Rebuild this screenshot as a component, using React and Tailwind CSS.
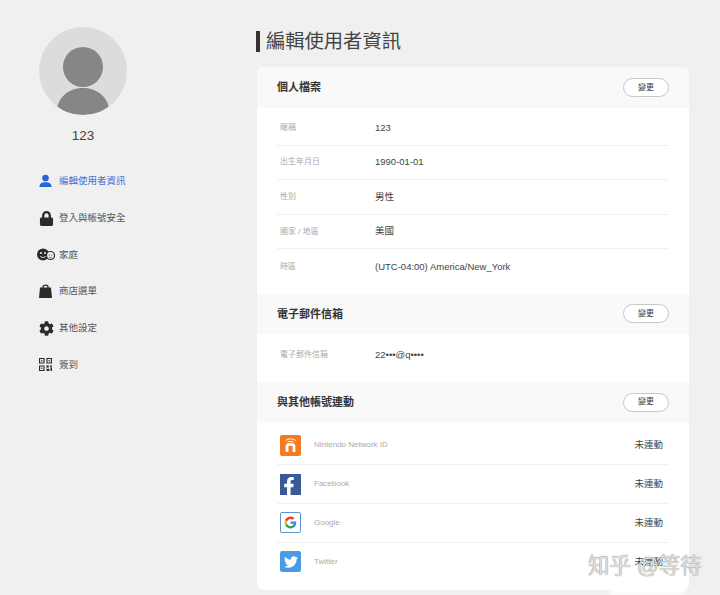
import React from 'react';
import { FaFacebookF, FaTwitter, FaLock, FaCog } from 'react-icons/fa';

const UserIcon = ({ className }) => (
  <svg viewBox="0 0 14 14" className={className} fill="currentColor">
    <circle cx="7" cy="3.8" r="3.6" />
    <path d="M0.5 13.5 C0.5 9.8 3 8.4 7 8.4 C11 8.4 13.5 9.8 13.5 13.5 Z" />
  </svg>
);

const FamilyIcon = ({ className }) => (
  <svg viewBox="0 0 18 13" className={className}>
    <circle cx="6" cy="6.5" r="6" fill="#2b2b2b" />
    <circle cx="4" cy="5" r="1" fill="#f0f0f0" />
    <circle cx="8" cy="5" r="1" fill="#f0f0f0" />
    <path d="M3.2 8 C4.5 10 7.5 10 8.8 8" stroke="#f0f0f0" strokeWidth="1" fill="none" />
    <circle cx="13.5" cy="7.5" r="4" fill="#f0f0f0" stroke="#2b2b2b" strokeWidth="1.2" />
    <circle cx="12.2" cy="7" r="0.6" fill="#2b2b2b" />
    <circle cx="14.8" cy="7" r="0.6" fill="#2b2b2b" />
    <path d="M12 9 C13 9.8 14 9.8 15 9" stroke="#2b2b2b" strokeWidth="0.7" fill="none" />
  </svg>
);

const BagIcon = ({ className }) => (
  <svg viewBox="0 0 13 14" className={className}>
    <path d="M4 4 V2.8 C4 0.6 9 0.6 9 2.8 V4" fill="none" stroke="#2b2b2b" strokeWidth="1.3" />
    <path d="M1 3.5 H12 L13 14 H0 Z" fill="#2b2b2b" />
  </svg>
);

const QrIcon = ({ className }) => (
  <svg viewBox="0 0 14 14" className={className} fill="#2b2b2b">
    <path fillRule="evenodd" d="M0 0h6v6H0z M1.2 1.2v3.6h3.6V1.2z" />
    <rect x="2.3" y="2.3" width="1.4" height="1.4" />
    <path fillRule="evenodd" d="M8 0h6v6H8z M9.2 1.2v3.6h3.6V1.2z" />
    <rect x="10.3" y="2.3" width="1.4" height="1.4" />
    <path fillRule="evenodd" d="M0 8h6v6H0z M1.2 9.2v3.6h3.6V9.2z" />
    <rect x="2.3" y="10.3" width="1.4" height="1.4" />
    <rect x="8" y="8" width="2.4" height="2.4" />
    <rect x="11.6" y="8" width="2.4" height="1.4" />
    <rect x="12.4" y="10" width="1.6" height="4" />
    <rect x="8" y="11.6" width="3.2" height="2.4" />
  </svg>
);

const NintendoLogo = () => (
  <div className="w-[21px] h-[21px] rounded-[2px] bg-[#f47a25] flex items-center justify-center">
    <svg viewBox="0 0 21 21" className="w-[21px] h-[21px]" fill="none" stroke="#fff">
      <path d="M5.5 5.5 C8 3.4 13 3.4 15.5 5.5" strokeWidth="1" />
      <path d="M7.5 7.2 C9 6.2 12 6.2 13.5 7.2" strokeWidth="1" />
      <path d="M7 17 V11 C7 8.8 14 8.8 14 11 V17" strokeWidth="2.8" />
    </svg>
  </div>
);

const GoogleLogo = () => (
  <div className="w-[21px] h-[21px] rounded-[2px] bg-white border border-[#5b93d3] flex items-center justify-center">
    <svg viewBox="0 0 24 24" className="w-[13px] h-[13px]">
      <path fill="#4285F4" d="M22.6 12.3c0-.8-.1-1.6-.2-2.3H12v4.3h5.900c-.3 1.400-1 2.500-2.200 3.300v2.800h3.600c2.100-1.900 3.300-4.800 3.300-8.100z" />
      <path fill="#34A853" d="M12 23c3 0 5.500-1 7.300-2.700l-3.600-2.800c-1 .7-2.200 1.100-3.700 1.100-2.900 0-5.300-1.900-6.200-4.500H2.100v2.900C3.900 20.500 7.700 23 12 23z" />
      <path fill="#FBBC05" d="M5.800 14.100c-.2-.7-.4-1.400-.4-2.100s.1-1.400.4-2.100V7H2.100C1.400 8.500 1 10.200 1 12s.4 3.500 1.100 5l3.700-2.900z" />
      <path fill="#EA4335" d="M12 5.400c1.600 0 3.100.6 4.200 1.600l3.200-3.200C17.500 2 15 1 12 1 7.700 1 3.900 3.500 2.100 7l3.700 2.900C6.700 7.300 9.100 5.400 12 5.400z" />
    </svg>
  </div>
);

const menu = [
  { label: '編輯使用者資訊', icon: <UserIcon className="w-[13px] h-[14px]" />, active: true },
  { label: '登入與帳號安全', icon: <FaLock className="text-[15px] text-[#2b2b2b]" /> },
  { label: '家庭', icon: <FamilyIcon className="w-[18px] h-[13px] shrink-0 -ml-[2px]" /> },
  { label: '商店選單', icon: <BagIcon className="w-[13px] h-[14px]" /> },
  { label: '其他設定', icon: <FaCog className="text-[15px] text-[#2b2b2b]" /> },
  { label: '簽到', icon: <QrIcon className="w-[13px] h-[13px]" /> },
];

const profile = [
  ['暱稱', '123'],
  ['出生年月日', '1990-01-01'],
  ['性別', '男性'],
  ['國家 / 地區', '美國'],
  ['時區', '(UTC-04:00) America/New_York'],
];

const linked = [
  { name: 'Nintendo Network ID', logo: <NintendoLogo /> },
  { name: 'Facebook', logo: <div className="w-[21px] h-[21px] bg-[#3b5998] flex items-end justify-end pr-[3px] text-white"><FaFacebookF className="text-[18px]" /></div> },
  { name: 'Google', logo: <GoogleLogo /> },
  { name: 'Twitter', logo: <div className="w-[21px] h-[21px] rounded-[2px] bg-[#4a9be5] flex items-center justify-center text-white"><FaTwitter className="text-[14px]" /></div> },
];

const SectionHeader = ({ title, className }) => (
  <div className={`flex items-center justify-between bg-[#f9f9f9] px-5 ${className}`}>
    <h2 className="text-[11px] font-bold text-[#333]">{title}</h2>
    <button className="w-[46px] h-[19px] rounded-full border border-[#c8c8c8] bg-white text-[8px] text-[#333] flex items-center justify-center">變更</button>
  </div>
);

const InfoRow = ({ label, value, last }) => (
  <div className={`flex items-center h-[34.6px] mx-5 ${last ? '' : 'border-b border-[#f0f0f0]'}`}>
    <span className="w-[98px] pl-[3px] text-[8px] text-[#aaa]">{label}</span>
    <span className="text-[9.5px] text-[#444]">{value}</span>
  </div>
);

export default function App() {
  return (
    <div className="relative h-[595px] w-[720px] overflow-hidden bg-[#f0f0f0] flex font-['Liberation_Sans','Noto_Sans_CJK_TC',sans-serif]">
      <aside className="w-[257px] shrink-0 pt-[27px] pl-[39px]">
        <div className="w-[88px] flex flex-col items-center">
          <div className="w-[88px] h-[88px] rounded-full bg-[#dcdcdc] overflow-hidden">
            <svg viewBox="0 0 88 88" className="w-full h-full" fill="#868686">
              <circle cx="44" cy="40" r="20" />
              <path d="M18 82 C20 68 32 61 44 61 C56 61 68 68 70 82 C62 86 52 88 44 88 C36 88 26 86 18 82 Z" />
            </svg>
          </div>
          <p className="mt-[13px] text-[13.5px] leading-4 text-[#444]">123</p>
        </div>
        <nav className="mt-[19px] flex flex-col">
          {menu.map((item) => (
            <div key={item.label} className="flex items-center h-[36.7px]">
              <span className={`w-[20px] shrink-0 flex justify-start ${item.active ? 'text-[#2a62d8]' : ''}`}>{item.icon}</span>
              <span className={`text-[9.5px] ${item.active ? 'text-[#4a6fd0]' : 'text-[#555]'}`}>{item.label}</span>
            </div>
          ))}
        </nav>
      </aside>

      <main className="flex-1 pt-[31px]">
        <h1 className="h-[21px] pt-[2px] flex items-center border-l-[4px] border-[#333] pl-[6px] -ml-[1px] text-[19.3px] text-[#444]">編輯使用者資訊</h1>
        <section className="mt-[15px] w-[432px] h-[523px] bg-white rounded-[6px] overflow-hidden">
          <SectionHeader title="個人檔案" className="h-[41px] rounded-t-[6px]" />
          <div className="pt-[3px] pb-[10px]">
            {profile.map(([label, value], i) => (
              <InfoRow key={label} label={label} value={value} last={i === profile.length - 1} />
            ))}
          </div>
          <SectionHeader title="電子郵件信箱" className="h-[40px]" />
          <div className="pt-[4px] pb-[9px]">
            <InfoRow label="電子郵件信箱" value="22•••@q••••" last />
          </div>
          <SectionHeader title="與其他帳號連動" className="h-[41px]" />
          <div className="pt-[4px]">
            {linked.map((item, i) => (
              <div key={item.name} className={`flex items-center h-[38.7px] mx-5 ${i === linked.length - 1 ? '' : 'border-b border-[#f0f0f0]'}`}>
                <span className="w-[37px] pl-[3px]">{item.logo}</span>
                <span className="flex-1 text-[8px] text-[#aaa]">{item.name}</span>
                <span className="pr-[6px] text-[9.5px] text-[#444]">未連動</span>
              </div>
            ))}
          </div>
        </section>
      </main>

      <div className="absolute left-[610px] top-[587px] w-[75px] h-[8px] bg-white blur-[2px]" />
      <div className="absolute left-[588px] top-[552px] text-[21.5px] leading-[28px] text-[#dedede] [text-shadow:0_0_1px_#666] whitespace-nowrap">知乎 @等待</div>
    </div>
  );
}
